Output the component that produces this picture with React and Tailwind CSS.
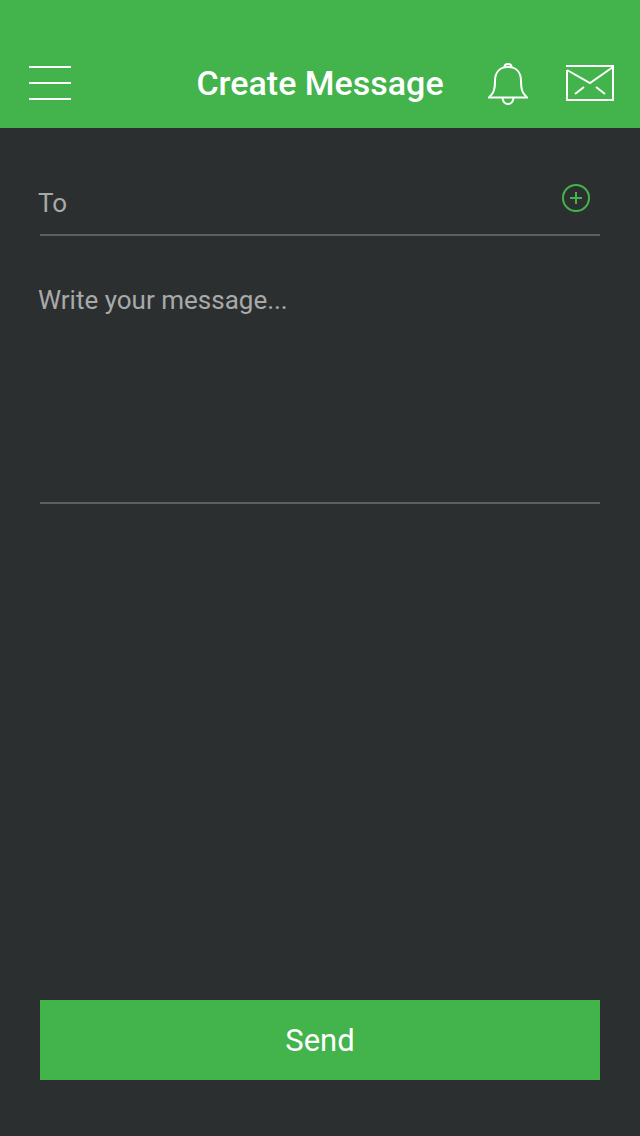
export default function App() {
  return (
    <div className="w-[640px] h-[1136px] flex flex-col bg-[#2c2f30] font-['Roboto',sans-serif] overflow-hidden">
      <header className="h-[128px] shrink-0 bg-[#43b34c] pt-[40px] pl-[29px] pr-[26px] flex items-center justify-between relative">
        <div className="w-[42px] mb-[2px] flex flex-col gap-[14px]">
          <div className="h-[2px] bg-white" />
          <div className="h-[2px] bg-white" />
          <div className="h-[2px] bg-white" />
        </div>
        <h1 className="absolute left-0 right-0 top-[39px] h-[88px] flex items-center justify-center text-white text-[34px] font-medium leading-none">Create Message</h1>
        <div className="flex items-center gap-[38px]">
          <svg width="40" height="42" viewBox="0 0 40 42" fill="none" stroke="white" strokeWidth="2">
            <path d="M0 34.5 H40" />
            <path d="M1.5 34 C6 30 7 26 7 18 C7 9 12 4 20 4 C28 4 33 9 33 18 C33 26 34 30 38.5 34" />
            <path d="M16.5 4 C16.5 2 18 1 20 1 C22 1 23.5 2 23.5 4" />
            <path d="M14.5 35 C15 39 17.5 41 20 41 C22.5 41 25 39 25.5 35" />
          </svg>
          <svg className="mb-[2px]" width="48" height="36" viewBox="0 0 48 36" fill="none" stroke="white" strokeWidth="2">
            <path d="M0 1 H47 V35 H1 V5" />
            <path d="M1 5 L24 18 L47 2" />
            <path d="M9 29 L18 22" />
            <path d="M30 22 L39 29" />
          </svg>
        </div>
      </header>
      <main className="flex-1 flex flex-col px-[40px] pb-[56px]">
        <div className="h-[108px] shrink-0 border-b-2 border-[#5c6060] relative flex items-end">
          <span className="text-[#a8a9a9] text-[26px] leading-none ml-[-2px] mb-[18px]">To</span>
          <svg className="absolute right-[9px] top-[55px]" width="30" height="30" viewBox="0 0 30 30" fill="none" stroke="#43b34c" strokeWidth="2">
            <circle cx="15" cy="15" r="13" />
            <path d="M9 15 H21 M15 9 V21" />
          </svg>
        </div>
        <div className="h-[268px] shrink-0 border-b-2 border-[#5c6060] pt-[51px]">
          <span className="block text-[#a8a9a9] text-[26px] leading-none ml-[-2px]">Write your message...</span>
        </div>
        <div className="flex-1" />
        <button className="h-[80px] shrink-0 w-full bg-[#43b34c] text-white text-[31px] font-normal flex items-center justify-center pt-[2px]">Send</button>
      </main>
    </div>
  );
}
